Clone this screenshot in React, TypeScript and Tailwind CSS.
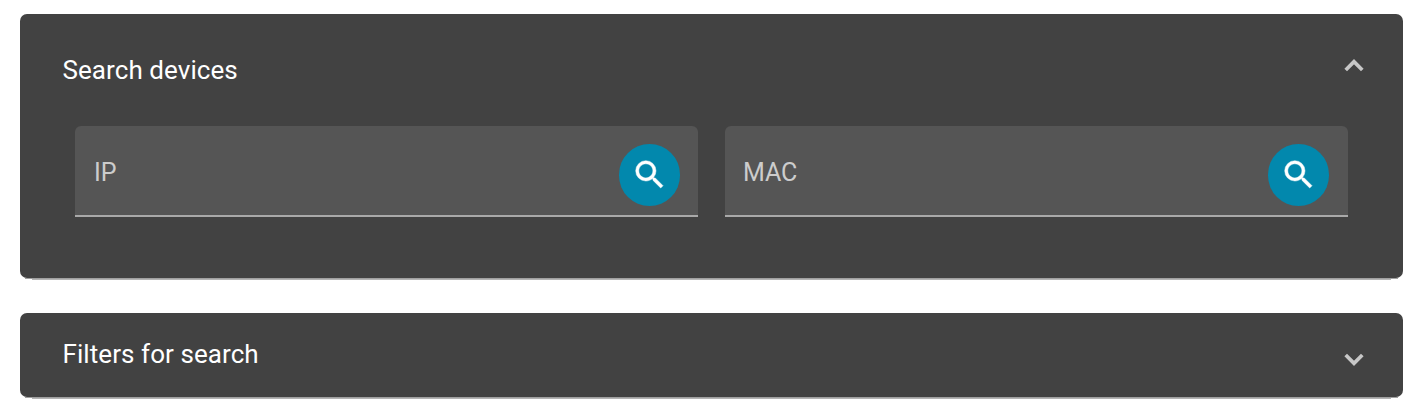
import React from "react";

function Chevron({ open }: { open: boolean }) {
  return (
    <svg className="h-[13px] w-5 shrink-0" viewBox="0 0 20 13" fill="none" stroke="#c7c7c7" strokeWidth="3.7">
      <path d={open ? "M1.7 11L10 2.7L18.3 11" : "M1.7 2L10 10.3L18.3 2"} />
    </svg>
  );
}

function PanelEdge() {
  return (
    <div>
      <div className="mx-[5px] h-px bg-[#a0a0a0]" />
      <div className="mx-3 h-px bg-[#b4b4b4]" />
    </div>
  );
}

function SearchField({ label, padding }: { label: string; padding: string }) {
  return (
    <div className={`flex h-[91px] w-[623px] items-start justify-between rounded-t-[6px] border-b-2 border-[#a9a9a9] bg-[#555555] pt-[18px] ${padding}`}>
      <label className="mt-[12px] text-[25px] leading-[34px] tracking-[-0.15px] text-[#cccccc]">{label}</label>
      <button
        type="button"
        aria-label={`Search by ${label}`}
        className="flex h-[62px] w-[61px] items-center justify-center rounded-full bg-[#0288ad] pb-px text-white"
      >
        <svg className="size-[37.5px]" viewBox="0 0 24 24" fill="currentColor" stroke="currentColor" strokeWidth="0.3">
          <path d="M15.5 14h-.79l-.28-.27A6.471 6.471 0 0 0 16 9.5 6.5 6.5 0 1 0 9.5 16c1.61 0 3.09-.59 4.23-1.57l.27.28v.79l5 4.99L20.49 19l-4.99-5zm-6 0C7.01 14 5 11.99 5 9.5S7.01 5 9.5 5 14 7.01 14 9.5 11.99 14 9.5 14z" />
        </svg>
      </button>
    </div>
  );
}

export default function App() {
  return (
    <main className="flex h-[416px] w-[1415px] flex-col bg-white pt-[14px] pl-5 font-['Roboto',sans-serif]">
      <section className="w-[1383px]">
        <div className="h-[264px] rounded-[7px] bg-[#424242] pt-[38px]">
          <header className="flex h-[36px] items-start justify-between pr-[39px] pl-[42.5px]">
            <h2 className="text-[26px] leading-[36px] tracking-[0.07px] text-white">Search devices</h2>
            <div className="pt-[7px]"><Chevron open /></div>
          </header>
          <div className="mt-[38px] flex gap-[27px] pl-[55px]">
            <SearchField label="IP" padding="pl-[19px] pr-[18px]" />
            <SearchField label="MAC" padding="pl-[18px] pr-[19px]" />
          </div>
        </div>
        <PanelEdge />
      </section>
      <section className="mt-[33px] w-[1383px]">
        <header className="flex h-[84px] items-start justify-between rounded-[7px] bg-[#424242] pt-[23px] pr-[39px] pl-[42.5px]">
          <h2 className="text-[26px] leading-[36px] tracking-[0.07px] text-white">Filters for search</h2>
          <div className="pt-[17px]"><Chevron open={false} /></div>
        </header>
        <PanelEdge />
      </section>
    </main>
  );
}
